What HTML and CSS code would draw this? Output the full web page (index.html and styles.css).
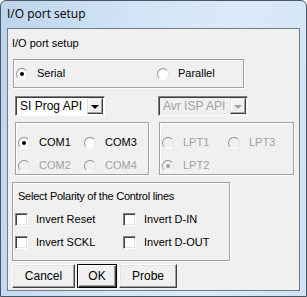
FILE: index.html
```html
<!DOCTYPE html>
<html lang="en">
<head>
  <meta charset="UTF-8" />
  <title>I/O port setup</title>
  <link rel="stylesheet" href="styles.css">
</head>
<body>
  <div class="window">
    <div class="titlebar">I/O port setup</div>
    <div class="client">
      <div class="heading">I/O port setup</div>

      <div class="group port-type">
        <label class="opt serial"><span class="radio checked"></span>Serial</label>
        <label class="opt parallel"><span class="radio"></span>Parallel</label>
      </div>

      <div class="combos">
        <div class="combo">
          <span class="combo-text">SI Prog API</span>
          <span class="drop"><span class="arrow"></span></span>
        </div>
        <div class="combo disabled">
          <span class="combo-text">Avr ISP API</span>
          <span class="drop"><span class="arrow"></span></span>
        </div>
      </div>

      <div class="ports">
        <div class="group ports-box com">
          <label class="opt"><span class="radio checked"></span>COM1</label>
          <label class="opt"><span class="radio"></span>COM3</label>
          <label class="opt disabled"><span class="radio"></span>COM2</label>
          <label class="opt disabled"><span class="radio"></span>COM4</label>
        </div>
        <div class="group ports-box lpt">
          <label class="opt disabled"><span class="radio"></span>LPT1</label>
          <label class="opt disabled"><span class="radio"></span>LPT3</label>
          <label class="opt disabled"><span class="radio checked"></span>LPT2</label>
        </div>
      </div>

      <div class="group polarity">
        <div class="pol-title">Select Polarity of the Control lines</div>
        <div class="checks">
          <label class="chk"><span class="box"></span>Invert Reset</label>
          <label class="chk"><span class="box"></span>Invert D-IN</label>
          <label class="chk"><span class="box"></span>Invert SCKL</label>
          <label class="chk"><span class="box"></span>Invert D-OUT</label>
        </div>
      </div>

      <div class="buttons">
        <button class="btn cancel">Cancel</button>
        <button class="btn ok">OK</button>
        <button class="btn probe">Probe</button>
      </div>
    </div>
  </div>
</body>
</html>
```

FILE: styles.css
```css
* {
  box-sizing: border-box;
}
body {
  margin: 0;
  background: #fff;
  font-family: "Liberation Sans", Arial, sans-serif;
  font-size: 11px;
  color: #000;
}
.window {
  width: 307px;
  height: 297px;
  border: 1px solid #4a5663;
  border-radius: 6px 6px 0 0;
  background: linear-gradient(100deg, #bcd4ec 0%, #d3e5f6 40%, #dbeaf8 70%, #cfe2f5 100%);
  padding: 0 6px 5px 6px;
  display: flex;
  flex-direction: column;
}
.titlebar {
  height: 27px;
  padding: 5px 0 0 0;
  font-family: "Open Sans", "Liberation Sans", sans-serif;
  font-size: 12px;
  line-height: 16px;
  color: #000;
}
.client {
  flex: 1;
  background: #f0f0f0;
  border: 1px solid #6f7d8a;
  display: flex;
  flex-direction: column;
  align-items: flex-start;
}
.heading {
  margin: 8px 0 0 4px;
  line-height: 13px;
}
.group {
  border: 1px solid #a0a0a0;
  box-shadow: 1px 1px 0 #fff, inset 1px 1px 0 #fff;
}
.port-type {
  margin: 9px 0 0 5px;
  width: 231px;
  height: 29px;
  display: flex;
  align-items: center;
}
.opt {
  display: flex;
  align-items: center;
  line-height: 13px;
  white-space: nowrap;
}
.opt.disabled {
  color: #a0a0a0;
}
.radio {
  width: 12px;
  height: 12px;
  border-radius: 50%;
  background: radial-gradient(circle at 60% 60%, #fff 55%, #e6e6e6 100%);
  border: 1px solid;
  border-color: #8a8a8a #e2e2e2 #fff #9a9a9a;
  margin-right: 9px;
  position: relative;
  flex: none;
}
.disabled .radio {
  background: #f0f0f0;
}
.radio.checked::after {
  content: "";
  position: absolute;
  left: 3px;
  top: 3px;
  width: 4px;
  height: 4px;
  border-radius: 50%;
  background: #000;
}
.disabled .radio.checked::after {
  background: #a0a0a0;
}
.serial {
  margin-left: 2px;
  width: 141px;
}
.combos {
  margin: 8px 0 0 7px;
  display: flex;
  gap: 53px;
}
.combo {
  width: 90px;
  height: 20px;
  background: #fff;
  border: 1px solid;
  border-color: #808080 #fff #fff #808080;
  box-shadow: inset 1px 1px 0 #404040;
  display: flex;
  align-items: center;
  padding: 1px 1px 1px 2px;
}
.combo-text {
  flex: 1;
  padding-left: 2px;
  font-size: 12px;
}
.combo.disabled {
  background: #f0f0f0;
  color: #a0a0a0;
}
.drop {
  width: 16px;
  height: 16px;
  background: #f0f0f0;
  border: 1px solid;
  border-color: #e3e3e3 #404040 #404040 #e3e3e3;
  box-shadow: inset -1px -1px 0 #a0a0a0, inset 1px 1px 0 #fff;
  display: flex;
  align-items: center;
  justify-content: center;
}
.arrow {
  width: 0;
  height: 0;
  border-left: 4px solid transparent;
  border-right: 4px solid transparent;
  border-top: 4px solid #000;
  margin-top: 1px;
}
.disabled .arrow {
  border-top-color: #a0a0a0;
}
.ports {
  margin: 6px 0 0 7px;
  display: flex;
  gap: 10px;
}
.ports-box {
  height: 53px;
  display: grid;
  grid-template-columns: 66px auto;
  grid-auto-rows: 23px;
  align-content: start;
  padding: 8px 0 0 2px;
}
.com {
  width: 134px;
}
.lpt {
  width: 135px;
}
.polarity {
  margin: 7px 0 0 4px;
  width: 218px;
  height: 79px;
  padding: 7px 0 0 5px;
}
.pol-title {
  line-height: 13px;
  letter-spacing: -0.25px;
}
.checks {
  margin: 10px 0 0 -3px;
  display: grid;
  grid-template-columns: 108px auto;
  row-gap: 10px;
}
.chk {
  display: flex;
  align-items: center;
  line-height: 13px;
  white-space: nowrap;
}
.box {
  width: 13px;
  height: 13px;
  background: #fff;
  border: 1px solid;
  border-color: #808080 #fff #fff #808080;
  box-shadow: inset 1px 1px 0 #404040, inset -1px -1px 0 #e3e3e3;
  margin-right: 8px;
  flex: none;
}
.buttons {
  margin: 3px 0 0 4px;
  display: flex;
  gap: 2px;
}
.btn {
  height: 24px;
  font-family: "Liberation Sans", Arial, sans-serif;
  font-size: 12px;
  background: #f0f0f0;
  border: 1px solid;
  border-color: #fff #404040 #404040 #fff;
  box-shadow: inset -1px -1px 0 #a0a0a0, inset 1px 1px 0 #e3e3e3;
  padding: 0;
  color: #000;
}
.cancel {
  width: 63px;
}
.ok {
  width: 40px;
  outline: 1px solid #000;
  outline-offset: -1px;
  border-color: #000;
  box-shadow: inset 1px 1px 0 #fff, inset -1px -1px 0 #404040, inset -2px -2px 0 #a0a0a0;
}
.probe {
  width: 58px;
}
```
